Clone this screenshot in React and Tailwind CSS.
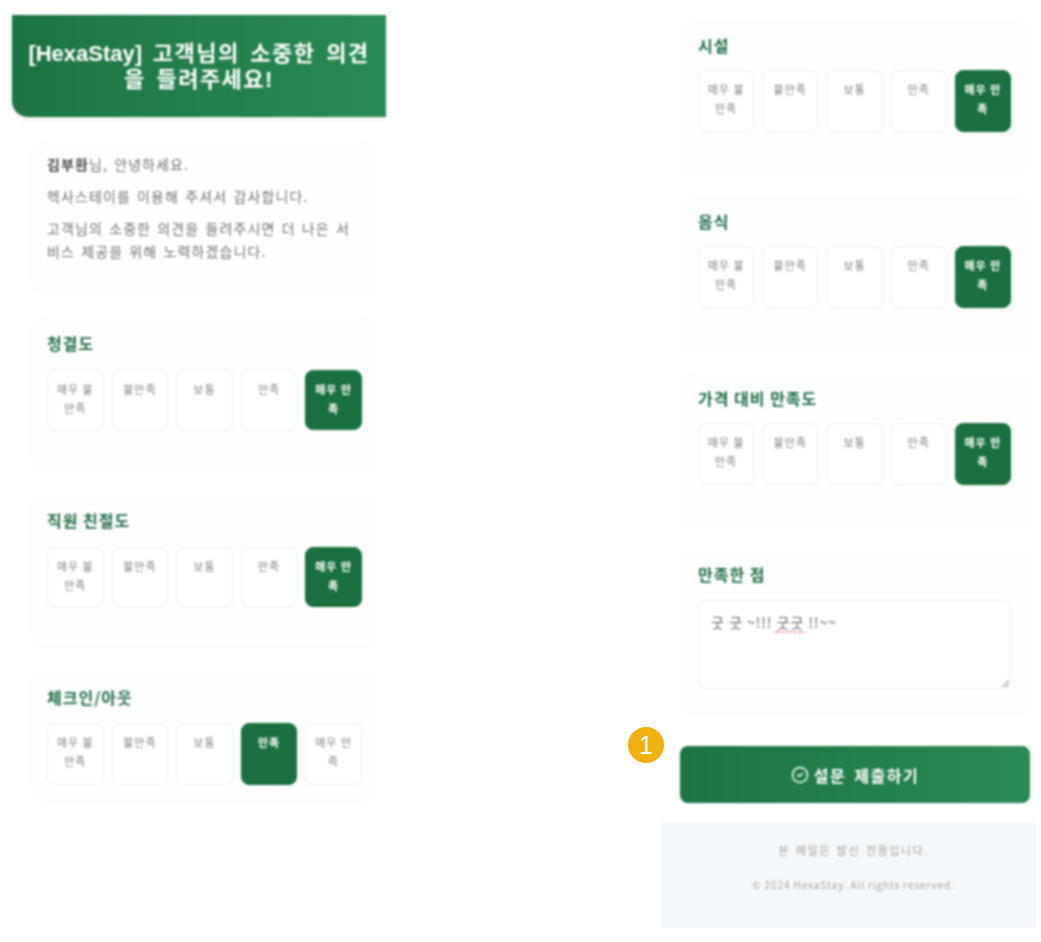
import { CircleCheck } from 'lucide-react';

const options = ['매우 불만족', '불만족', '보통', '만족', '매우 만족'];

function Rating({ title, selected, className = '', titleClass = 'mb-[16px]', btnClass = 'h-[60px]', padClass = 'pr-[14px] pl-[17px]' }) {
  return (
    <section className={`rounded-xl bg-[#fefefe] pt-[16px] shadow-[0_1px_3px_rgba(0,0,0,0.03)] ${padClass} ${className}`}>
      <h3 className={`text-[16px] leading-[22px] font-bold tracking-[1px] text-[#1f6b45] ${titleClass}`}>{title}</h3>
      <div className="flex gap-2">
        {options.map((label, i) => (
          <div
            key={label}
            className={`flex-1 rounded-lg border px-2 pt-[9px] text-center text-[11px] leading-[19px] tracking-[1px] ${btnClass} ${
              i === selected
                ? 'border-[#1a7040] bg-[#1a7040] font-bold text-white'
                : 'border-[#eeeeee] bg-white text-[#808080]'
            }`}
          >
            {label}
          </div>
        ))}
      </div>
    </section>
  );
}

export default function App() {
  return (
    <div className="h-[942px] w-[1041px] overflow-hidden bg-white font-['Noto_Sans_CJK_KR','Noto_Sans',sans-serif]">
      <div className="flex justify-between pt-[15px] pr-[5px] pl-[12px]">
        {/* Left column */}
        <div className="w-[374px] blur-[0.8px]">
          <header className="rounded-bl-2xl bg-gradient-to-r from-[#1c7444] to-[#2a8a55] px-[12px] pt-[26px] pb-[24px] text-center font-['Liberation_Sans','Noto_Sans_CJK_KR',sans-serif] text-[22px] leading-[26px] font-bold tracking-[1.5px] text-white shadow-[0_2px_6px_rgba(0,0,0,0.08)] [word-spacing:3px]">
            <span className="tracking-normal">[HexaStay]</span> 고객님의 소중한 의견을 들려주세요!
          </header>

          <div className="mt-[23px] ml-[18px] flex w-[346px] flex-col gap-[24px]">
            <div className="h-[152px] rounded-xl bg-[#fefefe] px-[17px] pt-[13px] text-[14px] leading-[23px] tracking-[1.1px] text-[#707070] shadow-[0_1px_3px_rgba(0,0,0,0.03)] [word-spacing:2px]">
              <p className="mb-[9px]"><strong className="text-[#444444]">김부환</strong>님, 안녕하세요.</p>
              <p className="mb-[9px]">헥사스테이를 이용해 주셔서 감사합니다.</p>
              <p>고객님의 소중한 의견을 들려주시면 더 나은 서비스 제공을 위해 노력하겠습니다.</p>
            </div>
            <Rating title="청결도" selected={4} className="h-[153px]" />
            <Rating title="직원 친절도" selected={4} className="h-[153px]" />
            <Rating title="체크인/아웃" selected={3} className="h-[130px]" titleClass="mb-[15px]" btnClass="h-[62px]" />
          </div>
        </div>

        {/* Right column */}
        <div className="relative w-[375px] pt-[4px]">
          <div className="ml-[19px] flex w-[350px] flex-col gap-[24px] blur-[0.8px]">
            <Rating title="시설" selected={4} className="h-[152px]" titleClass="mb-[14px] -mt-[1px]" btnClass="h-[62px]" padClass="pr-[19px] pl-[18px]" />
            <Rating title="음식" selected={4} className="h-[153px]" titleClass="mb-[14px] -mt-[1px]" btnClass="h-[62px]" padClass="pr-[19px] pl-[18px]" />
            <Rating title="가격 대비 만족도" selected={4} className="h-[153px]" titleClass="mb-[14px] -mt-[1px]" btnClass="h-[62px]" padClass="pr-[19px] pl-[18px]" />
            <section className="h-[164px] rounded-xl bg-[#fefefe] pt-[14px] pr-[19px] pl-[18px] shadow-[0_1px_3px_rgba(0,0,0,0.03)]">
              <h3 className="mb-[15px] text-[16px] leading-[22px] font-bold tracking-[1px] text-[#1f6b45]">만족한 점</h3>
              <div className="relative">
                <textarea
                  readOnly
                  spellCheck={false}
                  value="굿 굿 ~!!! 굿굿 !!~~"
                  className="block h-[89px] w-full rounded-lg border border-[#eeeeee] bg-white px-[12px] py-[11px] text-[14px] leading-[20px] tracking-[1px] text-[#606060] outline-none"
                />
                <span className="absolute top-[31px] left-[77px] h-[2px] w-[28px] border-b-2 border-dotted border-[#e58a8a]" />
              </div>
            </section>
          </div>

          <span className="absolute top-[712px] left-[-33px] z-10 flex h-[36px] w-[36px] items-center justify-center rounded-full bg-[#f0b010] font-['Liberation_Sans',sans-serif] text-[25px] leading-none text-white">
            1
          </span>

          <button className="mt-[33px] ml-[19px] flex h-[57px] w-[350px] items-center justify-center gap-[5px] rounded-lg bg-gradient-to-r from-[#1c7444] to-[#2a8a55] text-[16px] font-bold tracking-[1.5px] text-white blur-[0.8px] [word-spacing:3px]">
            <CircleCheck size={18} strokeWidth={2} />
            설문 제출하기
          </button>

          <footer className="mt-[19px] h-[106px] bg-[#f5f8fa] pt-[19px] pl-[10px] text-center text-[#a0a0a0] blur-[0.8px]">
            <p className="mb-[17px] text-[11px] leading-[18px] tracking-[1.5px] [word-spacing:2px]">본 메일은 발신 전용입니다.</p>
            <p className="text-[10px] leading-[18px] tracking-[0.9px]">© 2024 HexaStay. All rights reserved.</p>
          </footer>
        </div>
      </div>
    </div>
  );
}
